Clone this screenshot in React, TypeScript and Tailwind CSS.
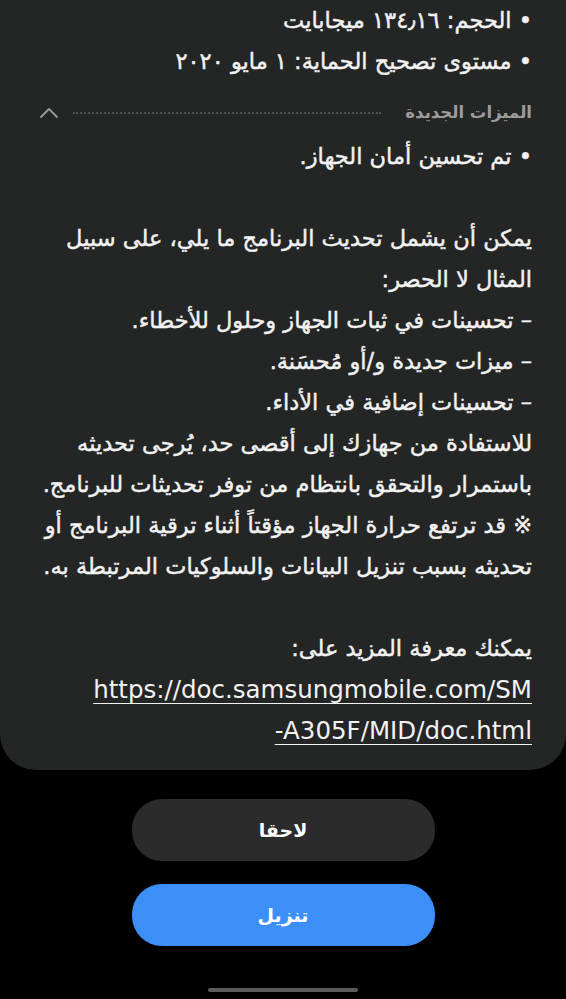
import React from "react";

const Line = ({ children, className = "" }: { children: React.ReactNode; className?: string }) => (
  <div className={`h-[41px] leading-[41px] whitespace-nowrap ${className}`}>{children}</div>
);

export default function App() {
  return (
    <div className="w-[566px] min-h-[999px] bg-black flex flex-col items-center" style={{ fontFamily: '"DejaVu Sans", sans-serif' }}>
      <div dir="rtl" className="w-full bg-[#242525] rounded-b-[36px] px-[34px] pb-[19px] text-[#f2f2f2] text-[22.5px] [-webkit-text-stroke:0.45px_#f2f2f2]">
        <Line>• الحجم: ١٣٤٫١٦ ميجابايت</Line>
        <Line>• مستوى تصحيح الحماية: ١ مايو ٢٠٢٠</Line>
        <div className="h-[54px] pt-[8px] flex items-center [-webkit-text-stroke:0px]">
          <span className="text-[16.5px] font-bold text-[#9c9c9c] whitespace-nowrap">الميزات الجديدة</span>
          <div className="flex-1 mr-[24px] border-t-2 border-dotted border-[#4e4e4e]" />
          <svg width="20" height="12" viewBox="0 0 20 12" className="mr-[14px] ml-[5px] shrink-0">
            <path d="M2 10 L10 2 L18 10" fill="none" stroke="#9a9a9a" strokeWidth="1.8" strokeLinecap="round" strokeLinejoin="round" />
          </svg>
        </div>
        <Line>• تم تحسين أمان الجهاز.</Line>
        <Line>{"\u00a0"}</Line>
        <Line>يمكن أن يشمل تحديث البرنامج ما يلي، على سبيل</Line>
        <Line>المثال لا الحصر:</Line>
        <Line>– تحسينات في ثبات الجهاز وحلول للأخطاء.</Line>
        <Line>– ميزات جديدة و/أو مُحسَنة.</Line>
        <Line>– تحسينات إضافية في الأداء.</Line>
        <Line>للاستفادة من جهازك إلى أقصى حد، يُرجى تحديثه</Line>
        <Line>باستمرار والتحقق بانتظام من توفر تحديثات للبرنامج.</Line>
        <Line>※ قد ترتفع حرارة الجهاز مؤقتاً أثناء ترقية البرنامج أو</Line>
        <Line>تحديثه بسبب تنزيل البيانات والسلوكيات المرتبطة به.</Line>
        <Line>{"\u00a0"}</Line>
        <Line>يمكنك معرفة المزيد على:</Line>
        <div dir="ltr" className="text-right text-[24.5px] leading-[41px] underline underline-offset-[5px] decoration-1 [-webkit-text-stroke:0px]">
          <div>https://doc.samsungmobile.com/SM</div>
          <div>-A305F/MID/doc.html</div>
        </div>
      </div>
      <button className="mt-[29px] w-[303px] h-[62px] rounded-[30px] bg-[#2b2b2b] text-white text-[19px] font-bold">لاحقا</button>
      <button className="mt-[23px] w-[303px] h-[62px] rounded-[30px] bg-[#3d8ff8] text-white text-[19px] font-bold">تنزيل</button>
      <div className="mt-[42px] w-[150px] h-[4px] rounded-full bg-[#5c5c5c]" />
    </div>
  );
}
